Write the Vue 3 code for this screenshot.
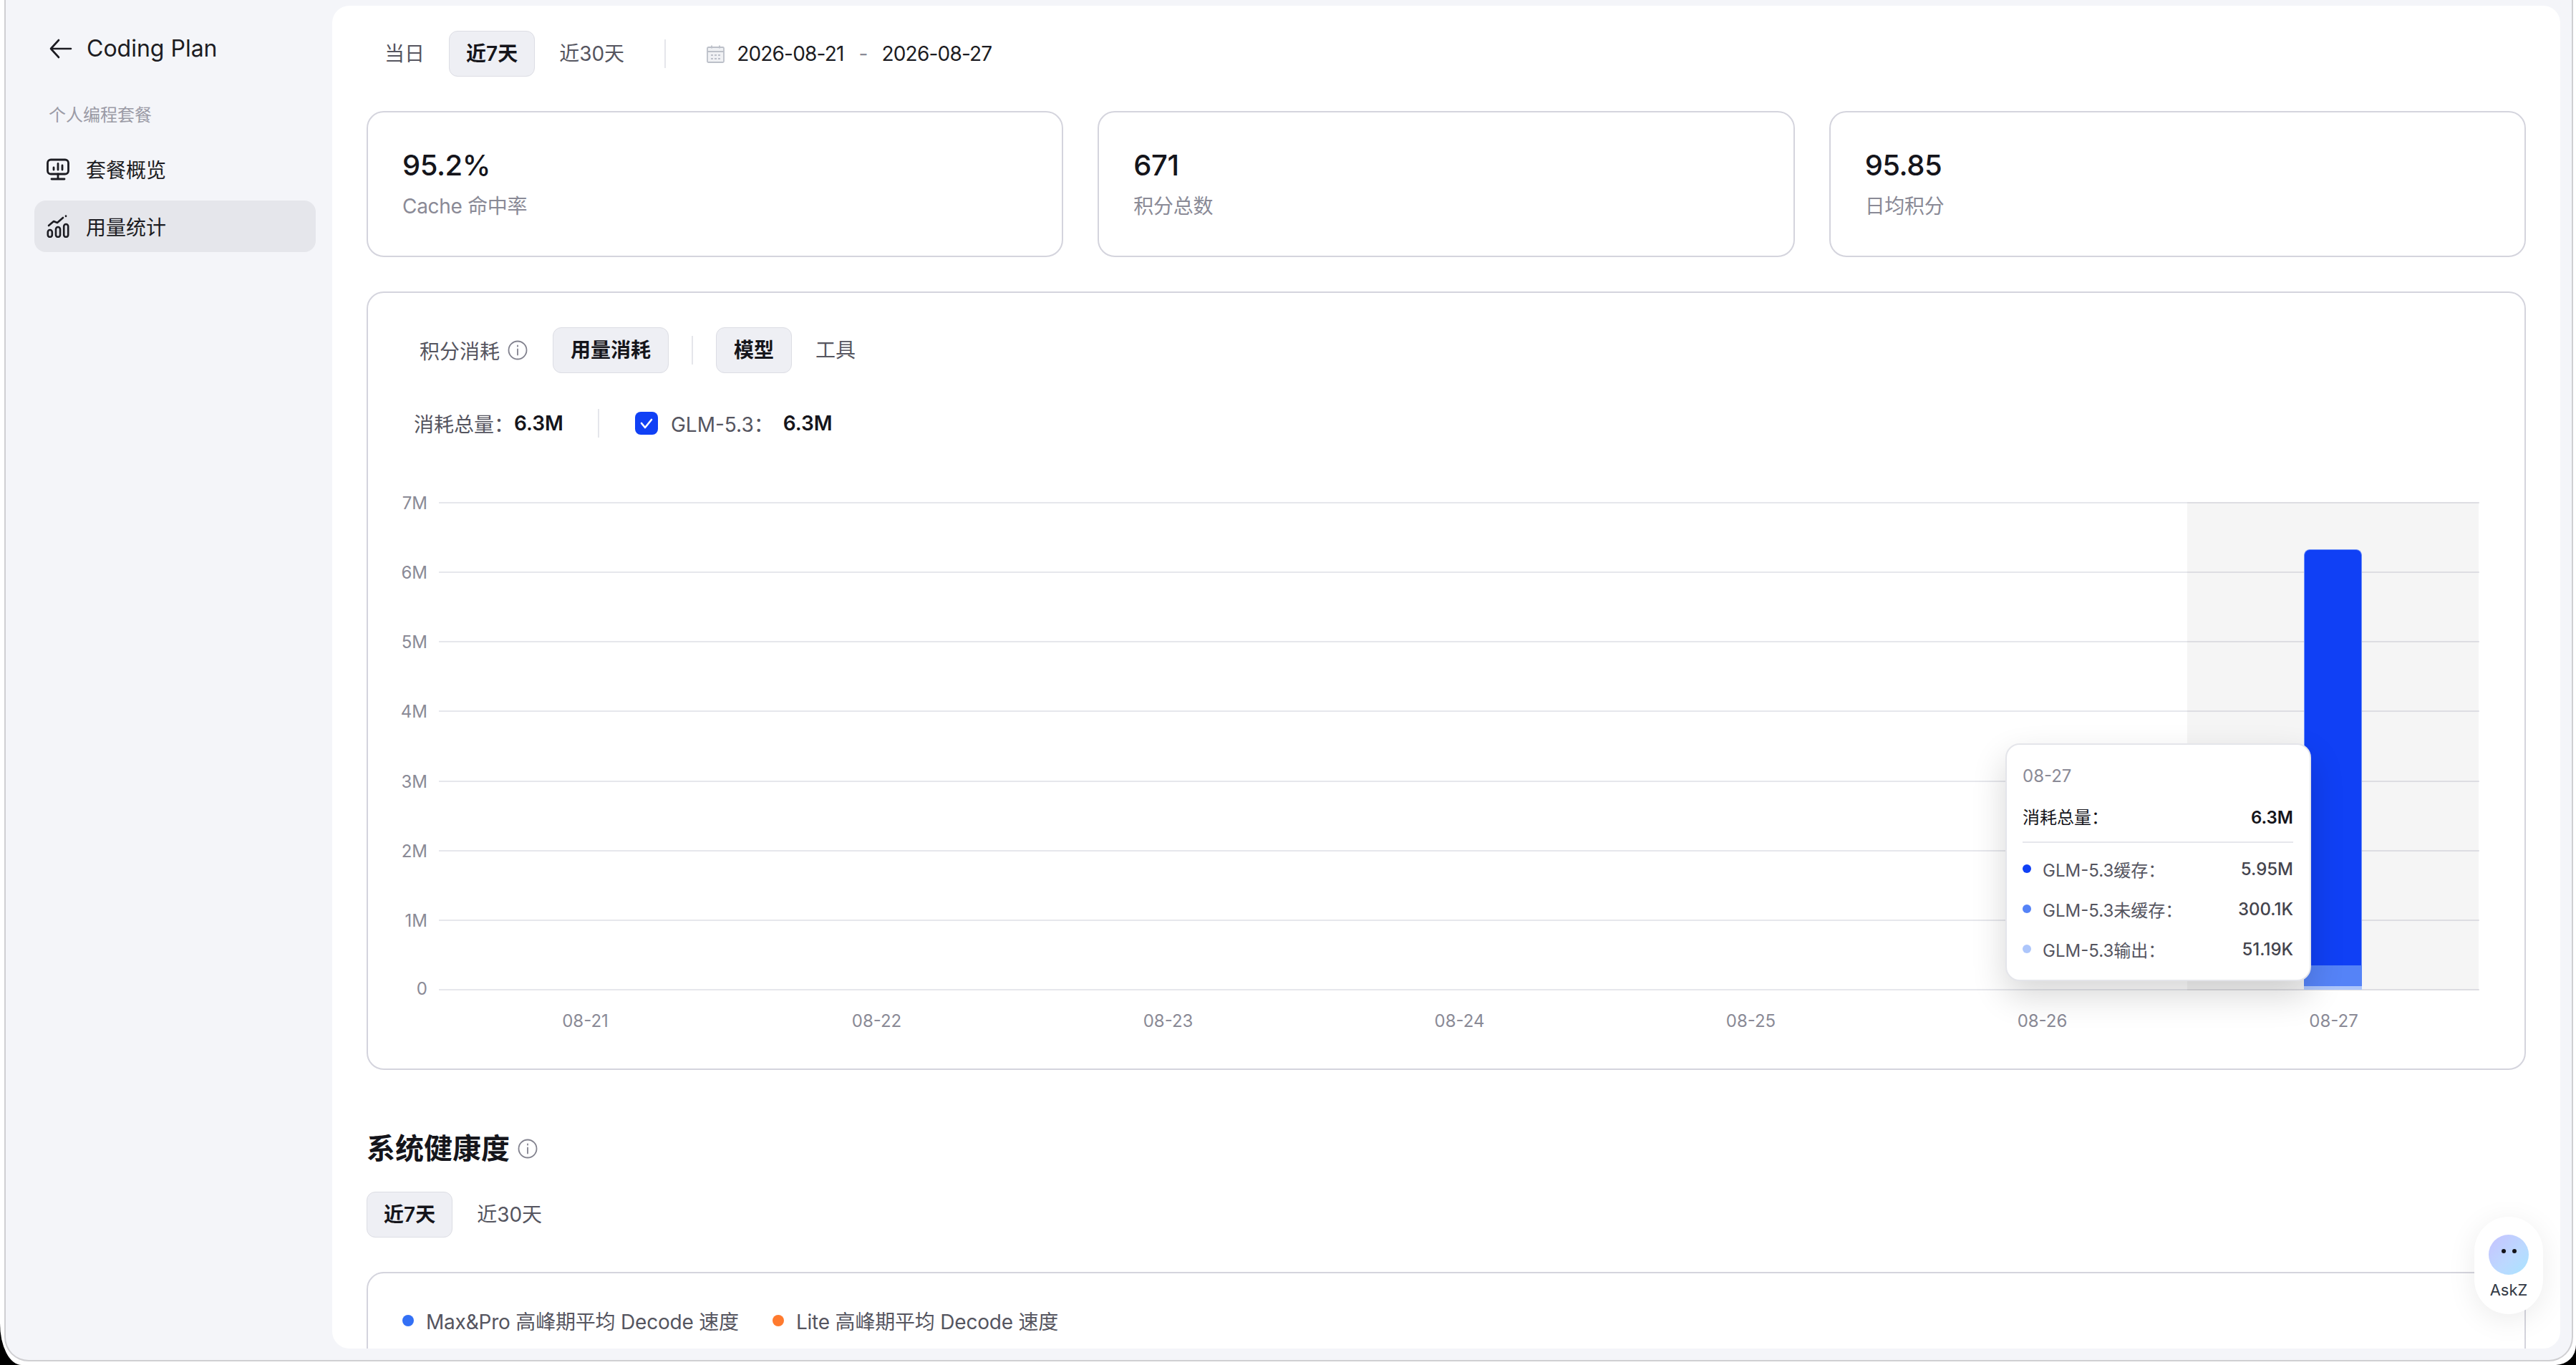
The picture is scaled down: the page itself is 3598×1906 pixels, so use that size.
<script setup>
const yLabels = ['7M', '6M', '5M', '4M', '3M', '2M', '1M']
const xLabels = ['08-21', '08-22', '08-23', '08-24', '08-25', '08-26', '08-27']
const stats = [
  { value: '95.2%', label: 'Cache 命中率' },
  { value: '671', label: '积分总数' },
  { value: '95.85', label: '日均积分' }
]
const rows = [
  { name: 'GLM-5.3缓存：', value: '5.95M', color: '#1040f5' },
  { name: 'GLM-5.3未缓存：', value: '300.1K', color: '#5583f7' },
  { name: 'GLM-5.3输出：', value: '51.19K', color: '#adc6fb' }
]
</script>

<template>
  <div class="screen">
    <div class="window">
      <aside class="sidebar">
        <div class="back">
          <svg class="back-icon" viewBox="0 0 32 28" fill="none" stroke="#1c1c22" stroke-width="2.6" stroke-linecap="round" stroke-linejoin="round">
            <path d="M2 14h28M13 2 2 14l11 12" />
          </svg>
          <span>Coding Plan</span>
        </div>
        <div class="side-title">个人编程套餐</div>
        <div class="nav-item">
          <svg class="nav-icon" viewBox="0 0 32 32" fill="none" stroke="#1c1c22" stroke-width="2.8" stroke-linecap="round" stroke-linejoin="round">
            <rect x="1.5" y="3" width="29" height="20" rx="4.500" />
            <path d="M16 23v6M7 30h18M10 17v-3M16 17V8.500M22 17v-6" />
          </svg>
          <span>套餐概览</span>
        </div>
        <div class="nav-item active">
          <svg class="nav-icon" viewBox="0 0 32 32" fill="none" stroke="#1c1c22" stroke-width="2.6" stroke-linecap="round" stroke-linejoin="round">
            <rect x="1.800" y="21" width="6" height="10" rx="3" />
            <rect x="13" y="17" width="6" height="14" rx="3" />
            <rect x="24.200" y="13" width="6" height="18" rx="3" />
            <path d="M3 15 10 9l5 2 8-7" />
            <path d="M27 1.500v.5" />
          </svg>
          <span>用量统计</span>
        </div>
      </aside>

      <main class="panel">
        <div class="top-bar">
          <div class="tab">当日</div>
          <div class="tab on">近7天</div>
          <div class="tab">近30天</div>
          <div class="top-divider"></div>
          <svg class="cal" viewBox="0 0 25 25" fill="#f0f1f4" stroke="#bcc0c9" stroke-width="1.800">
            <rect x="1" y="3" width="23" height="21" rx="1.500" />
            <path d="M1 9h23M7 .5v4M18 .5v4" fill="none" />
            <path d="M6 14h13M6 19h13" fill="none" stroke-dasharray="3 2" />
          </svg>
          <span class="date">2026-08-21</span>
          <span class="date-sep">-</span>
          <span class="date">2026-08-27</span>
        </div>

        <div class="stats">
          <div v-for="s in stats" :key="s.label" class="stat">
            <div class="stat-value">{{ s.value }}</div>
            <div class="stat-label">{{ s.label }}</div>
          </div>
        </div>

        <section class="chart-card">
          <div class="filters">
            <span class="filter-label">积分消耗</span>
            <svg class="info" viewBox="0 0 28 28" fill="none" stroke="#82828e" stroke-width="1.8" stroke-linecap="round">
              <circle cx="14" cy="14" r="12.500" />
              <path d="M14 12.500v8M14 7.500v1.200" />
            </svg>
            <div class="tab on usage">用量消耗</div>
            <div class="filter-divider"></div>
            <div class="tab on model">模型</div>
            <div class="tab tool">工具</div>
          </div>

          <div class="totals">
            <span class="total-label">消耗总量：</span>
            <b class="total-value">6.3M</b>
            <div class="total-divider"></div>
            <span class="check">
              <svg viewBox="0 0 32 32" fill="none" stroke="#fff" stroke-width="2.600" stroke-linecap="round" stroke-linejoin="round">
                <path d="m9 16 5 6 9-11" />
              </svg>
            </span>
            <span class="model-name">GLM-5.3：</span>
            <b class="model-value">6.3M</b>
          </div>

          <div class="chart">
            <div class="grid">
              <div v-for="y in yLabels" :key="y" class="grid-row">
                <span class="y-label">{{ y }}</span>
              </div>
              <div class="grid-base"><span class="y-label">0</span></div>
              <div class="band"></div>
              <div class="bar">
                <div class="seg-a"></div>
                <div class="seg-b"></div>
                <div class="seg-c"></div>
              </div>
              <div class="tooltip">
                <div class="tip-date">08-27</div>
                <div class="tip-total"><span>消耗总量：</span><b>6.3M</b></div>
                <div class="tip-line"></div>
                <div v-for="r in rows" :key="r.name" class="tip-row">
                  <i :style="{ background: r.color }"></i>
                  <span>{{ r.name }}</span>
                  <em>{{ r.value }}</em>
                </div>
              </div>
            </div>
            <div class="x-axis">
              <span v-for="x in xLabels" :key="x">{{ x }}</span>
            </div>
          </div>
        </section>

        <div class="health-title">
          <h2>系统健康度</h2>
          <svg class="info" viewBox="0 0 28 28" fill="none" stroke="#82828e" stroke-width="1.8" stroke-linecap="round">
            <circle cx="14" cy="14" r="12.500" />
            <path d="M14 12.500v8M14 7.500v1.200" />
          </svg>
        </div>
        <div class="health-tabs">
          <div class="tab on">近7天</div>
          <div class="tab">近30天</div>
        </div>
        <section class="health-card">
          <span class="dot blue"></span>
          <span class="legend first">Max&amp;Pro 高峰期平均 Decode 速度</span>
          <span class="dot orange"></span>
          <span class="legend">Lite 高峰期平均 Decode 速度</span>
        </section>

        <div class="askz">
          <span class="face"><i></i><i></i></span>
          <span class="askz-text">AskZ</span>
        </div>
      </main>
    </div>
  </div>
</template>

<style>
html, body { margin: 0; background: #000; }
</style>

<style scoped>
.screen {
  width: 3598px;
  height: 1906px;
  box-sizing: border-box;
  padding: 0 4px 5px 6px;
  background: #fff;
  border-radius: 0 0 28px 30px / 0 0 28px 58px;
  overflow: hidden;
  font-family: Inter, "Noto Sans CJK SC", sans-serif;
  color: #15151b;
}
.window {
  height: 100%;
  box-sizing: border-box;
  display: flex;
  padding: 8px 16px 16px 0;
  background: #f4f5f9;
  border: 2px solid #cfcfd2;
  border-top: 0;
  border-radius: 0 0 34px 34px;
}
.sidebar {
  width: 456px;
  flex: none;
  box-sizing: border-box;
  padding: 0 23px 0 40px;
}
.back {
  display: flex;
  align-items: center;
  height: 64px;
  margin-top: 28px;
  padding-left: 21px;
  gap: 20px;
  font-size: 32px;
  line-height: 64px;
  color: #1c1c22;
}
.back-icon { width: 32px; height: 28px; flex: none; }
.side-title {
  margin-top: 43px;
  padding-left: 20px;
  font-size: 24px;
  line-height: 36px;
  color: #9b9ba6;
}
.nav-item {
  display: flex;
  align-items: center;
  height: 72px;
  padding-left: 17px;
  gap: 23px;
  margin-top: 8px;
  border-radius: 16px;
  font-size: 28px;
  color: #1c1c22;
}
.side-title + .nav-item { margin-top: 21px; }
.nav-item.active { background: #e5e6eb; }
.nav-icon { width: 32px; height: 32px; flex: none; }

.panel {
  position: relative;
  flex: 1;
  min-width: 0;
  box-sizing: border-box;
  padding: 0 48px;
  background: #fff;
  border-radius: 24px;
  overflow: hidden;
}
.top-bar {
  display: flex;
  align-items: center;
  margin-top: 35px;
  height: 64px;
}
.tab {
  box-sizing: border-box;
  height: 64px;
  padding: 0 24px;
  line-height: 62px;
  border: 1px solid transparent;
  border-radius: 12px;
  font-size: 28px;
  color: #55555f;
  white-space: nowrap;
}
.tab + .tab { margin-left: 9px; }
.tab.on {
  padding: 0 23px;
  background: #eeeff4;
  border-color: #dcdde4;
  color: #15151b;
  font-weight: 600;
}
.top-divider {
  width: 2px;
  height: 40px;
  margin: 0 57px 0 31px;
  background: #e5e6eb;
}
.cal { width: 25px; height: 25px; margin-right: 17px; flex: none; }
.date { font-size: 28px; color: #1c1c22; letter-spacing: -0.8px; }
.date-sep { margin: 0 19px 0 21px; font-size: 28px; color: #8a8a96; }

.stats {
  display: grid;
  grid-template-columns: repeat(3, 1fr);
  gap: 48px;
  margin-top: 48px;
}
.stat {
  box-sizing: border-box;
  height: 204px;
  padding: 50px 48px 0;
  border: 2px solid #d4d4dd;
  border-radius: 24px;
}
.stat-value { font-size: 40px; line-height: 48px; font-weight: 500; letter-spacing: -0.5px; }
.stat-label { margin-top: 13px; font-size: 28px; line-height: 40px; color: #8a8a96; letter-spacing: -0.3px; }

.chart-card {
  box-sizing: border-box;
  height: 1087px;
  margin-top: 48px;
  padding: 48px 0 0;
  border: 2px solid #d4d4dd;
  border-radius: 24px;
}
.filters {
  display: flex;
  align-items: center;
  height: 64px;
  padding-left: 72px;
  font-size: 28px;
}
.filter-label { color: #55555f; }
.info { width: 28px; height: 28px; flex: none; margin-left: 11px; }
.tab.usage { margin-left: 35px; padding: 0 24px; }
.filter-divider { width: 2px; height: 40px; margin: 0 32px; background: #e5e6eb; }
.tab.model { padding: 0 24px; }
.tab.tool { margin-left: 8px; }
.totals {
  display: flex;
  align-items: center;
  height: 40px;
  margin-top: 50px;
  padding-left: 64px;
  font-size: 28px;
}
.total-label, .model-name { color: #55555f; }
.total-value, .model-value { font-weight: 600; color: #15151b; }
.total-divider { width: 2px; height: 40px; margin: 0 50px 0 48px; background: #e5e6eb; }
.check {
  width: 32px;
  height: 32px;
  border-radius: 8px;
  background: #1040f5;
  margin-right: 18px;
}
.check svg { display: block; width: 32px; height: 32px; }
.model-value { margin-left: 13px; }

.chart { margin: 90px 0 0 99px; width: 2850px; }
.grid { position: relative; }
.grid-row {
  position: relative;
  height: 97.14px;
  box-sizing: border-box;
  border-top: 2px solid #e6e7ec;
}
.grid-base {
  position: relative;
  height: 2px;
  background: #e6e7ec;
}
.y-label {
  position: absolute;
  right: calc(100% + 16px);
  top: -15px;
  font-size: 24px;
  line-height: 30px;
  color: #8a8a96;
}
.band {
  position: absolute;
  left: 2442px;
  width: 407px;
  top: 0;
  bottom: 0;
  background: rgba(0, 0, 0, 0.04);
}
.bar {
  position: absolute;
  left: 2605px;
  width: 81px;
  top: 66px;
  bottom: 1px;
  display: flex;
  flex-direction: column;
  border-radius: 8px 8px 0 0;
  overflow: hidden;
}
.seg-a {
  flex: 1;
  background: #1040f5;
  border: 1px solid #6d90f9;
  border-bottom: 0;
  border-radius: 8px 8px 0 0;
}
.seg-b { height: 29px; background: #5583f7; }
.seg-c { height: 5px; background: #adc6fb; }
.tooltip {
  position: absolute;
  left: 2188px;
  top: 337px;
  width: 427px;
  height: 332px;
  box-sizing: border-box;
  padding: 28px 23px 0 22px;
  background: #fff;
  border: 2px solid #e4e5ea;
  border-radius: 20px;
  box-shadow: 0 20px 48px rgba(0, 0, 0, 0.16);
  font-size: 24px;
}
.tip-date { line-height: 32px; color: #8a8a96; }
.tip-total {
  display: flex;
  justify-content: space-between;
  margin-top: 26px;
  line-height: 32px;
  color: #15151b;
}
.tip-total b { font-weight: 600; }
.tip-line { height: 2px; margin: 17px 0 8px; background: #e6e7ec; }
.tip-row {
  display: flex;
  align-items: center;
  height: 56px;
  color: #55555f;
}
.tip-row i { width: 12px; height: 12px; border-radius: 50%; margin-right: 16px; }
.tip-row em { margin-left: auto; font-style: normal; font-weight: 500; color: #44444d; }
.x-axis {
  display: grid;
  grid-template-columns: repeat(7, 1fr);
  margin-top: 28px;
  padding-left: 1px;
  text-align: center;
  font-size: 24px;
  line-height: 30px;
  color: #8a8a96;
}

.health-title {
  display: flex;
  align-items: center;
  margin-top: 86px;
  height: 48px;
}
.health-title h2 { margin: 0; font-size: 40px; font-weight: 600; line-height: 48px; }
.health-tabs { display: flex; margin-top: 36px; }
.health-card {
  display: flex;
  align-items: center;
  box-sizing: border-box;
  height: 300px;
  margin-top: 48px;
  padding: 0 48px 164px;
  border: 2px solid #d4d4dd;
  border-radius: 24px;
  font-size: 28px;
  color: #55555f;
  letter-spacing: -0.2px;
}
.dot { width: 16px; height: 16px; border-radius: 50%; margin-right: 17px; }
.dot.blue { background: #3370f5; }
.dot.orange { background: #ff7a2e; }
.legend.first { margin-right: 47px; }

.askz {
  position: absolute;
  right: 24px;
  bottom: 48px;
  width: 96px;
  height: 136px;
  box-sizing: border-box;
  padding-top: 25px;
  display: flex;
  flex-direction: column;
  align-items: center;
  background: #fff;
  border-radius: 48px;
  box-shadow: 0 8px 40px rgba(0, 0, 0, 0.08);
}
.face {
  width: 56px;
  height: 56px;
  display: flex;
  justify-content: center;
  gap: 9px;
  padding-top: 20px;
  box-sizing: border-box;
  border-radius: 50%;
  background: linear-gradient(135deg, #c6c2ff, #bcd8ff 55%, #a9e4ff);
}
.face i { width: 6px; height: 6px; border-radius: 50%; background: #15151b; }
.askz-text { margin-top: 8px; font-size: 22px; line-height: 26px; color: #333a45; }
</style>
